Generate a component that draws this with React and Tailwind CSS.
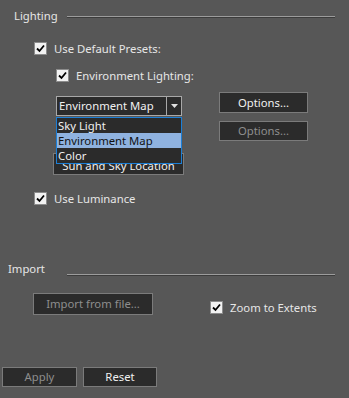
import { useState } from 'react';

const font = { fontFamily: '"Noto Sans", "DejaVu Sans", sans-serif' };

function Check({ label, className = '' }) {
  return (
    <div className={`flex items-center h-[13px] ${className}`}>
      <span className="w-[13px] h-[13px] bg-[#f2f2f2] border border-[#8c8c8c] flex items-center justify-center">
        <svg width="9" height="9" viewBox="0 0 9 9">
          <path d="M1 4.5 L3.5 7 L8 1.5" fill="none" stroke="#000" strokeWidth="1.8" />
        </svg>
      </span>
      <span className="ml-[7px] text-[11.3px] leading-[14px] text-[#e6e6e6]">{label}</span>
    </div>
  );
}

function Btn({ children, disabled, className = '' }) {
  return (
    <div className={`flex items-center justify-center bg-[#2b2b2b] border border-[#7b7b7b] text-[11.3px] leading-[14px] ${disabled ? 'text-[#8e8e8e]' : 'text-[#f0f0f0]'} ${className}`}>
      {children}
    </div>
  );
}

export default function App() {
  const [sel] = useState('Environment Map');
  const items = ['Sky Light', 'Environment Map', 'Color'];
  return (
    <div style={font} className="w-[349px] h-[398px] bg-[#575757] overflow-hidden flex flex-col">
      <div className="mt-[9px] flex pl-[14px] pr-[14px]">
        <span className="text-[11.3px] leading-[14px] text-[#e6e6e6] w-[53px]">Lighting</span>
        <div className="flex-1 border-t border-t-[#9c9c9c] border-b border-b-[#3c3c3c] h-[2px] mt-[7px]" />
      </div>

      <Check label="Use Default Presets:" className="mt-[19px] ml-[34px]" />
      <Check label="Environment Lighting:" className="mt-[14px] ml-[56px]" />

      <div className="mt-[10px] flex relative">
        <div className="ml-[56px] mt-[4px] w-[126px] h-[20px] flex border border-[#a8a8a8] bg-[#2b2b2b] relative z-10">
          <span className="flex-1 pl-[2px] text-[11.3px] leading-[18px] text-[#f0f0f0]">{sel}</span>
          <span className="w-[15px] border-l border-[#a8a8a8] flex items-center justify-center">
            <svg width="7" height="4" viewBox="0 0 7 4"><path d="M0 0 H7 L3.5 4 Z" fill="#e0e0e0" /></svg>
          </span>
          <div className="absolute left-[-1px] top-[20px] w-[126px] border border-[#1c7fd6] bg-[#2b2b2b]">
            {items.map((it) => (
              <div key={it} className={`h-[15px] pl-[1px] text-[11.3px] leading-[15px] ${it === sel ? 'bg-[#8fb2df] text-[#111]' : 'text-[#f0f0f0]'}`}>{it}</div>
            ))}
          </div>
        </div>
        <Btn className="ml-[37px] w-[89px] h-[21px]">Options...</Btn>
      </div>

      <div className="mt-[5px] flex">
        <Btn disabled className="ml-[219px] w-[89px] h-[20px]">Options...</Btn>
      </div>

      <Btn className="mt-[12px] ml-[53px] w-[131px] h-[22px] pt-[4px]">Sun and Sky Location</Btn>

      <Check label="Use Luminance" className="mt-[17px] ml-[34px]" />

      <div className="mt-[57px] flex pl-[8px] pr-[14px]">
        <span className="text-[11.3px] leading-[14px] text-[#e6e6e6] w-[59px]">Import</span>
        <div className="flex-1 border-t border-t-[#9c9c9c] border-b border-b-[#3c3c3c] h-[2px] mt-[12px]" />
      </div>

      <div className="mt-[17px] flex">
        <Btn disabled className="ml-[33px] w-[120px] h-[22px]">Import from file...</Btn>
        <Check label="Zoom to Extents" className="ml-[57px] mt-[8px]" />
      </div>

      <div className="mt-[52px] flex">
        <Btn disabled className="ml-[2px] w-[75px] h-[20px]">Apply</Btn>
        <Btn className="ml-[6px] w-[74px] h-[20px]">Reset</Btn>
      </div>
    </div>
  );
}
